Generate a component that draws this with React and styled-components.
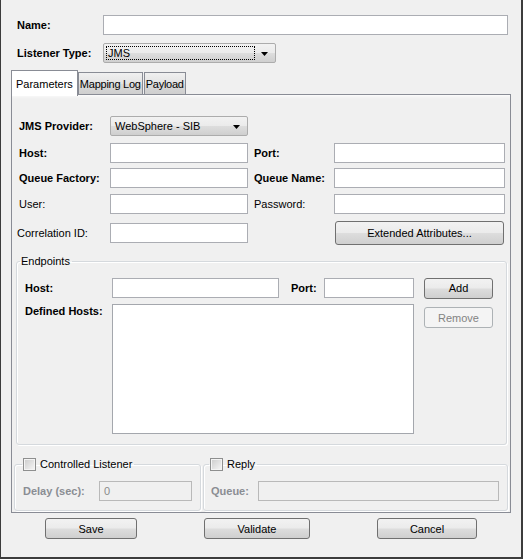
import React from "react";
import styled, { createGlobalStyle, css } from "styled-components";

const Global = createGlobalStyle`
  html, body { margin: 0; padding: 0; background: #f0f0f0; }
  body { font-family: "Liberation Sans", Arial, sans-serif; font-size: 11px; color: #000; }
  * { box-sizing: border-box; }
`;

const Frame = styled.div`
  width: 523px;
  height: 559px;
  background: #f0f0f0;
  border-left: 1px solid #3c3c3c;
  border-right: 2px solid #3c3c3c;
  border-bottom: 2px solid #3c3c3c;
  padding-top: 15px;
  display: flex;
  flex-direction: column;
`;

const TopForm = styled.div`
  padding-left: 16px;
  display: flex;
  flex-direction: column;
  gap: 8px;
`;

const Row = styled.div`
  display: flex;
  align-items: center;
  height: ${(p) => p.$h || 20}px;
  margin-top: ${(p) => p.$mt || 0}px;
  margin-left: ${(p) => p.$ml || 0}px;
`;

const Label = styled.div`
  width: ${(p) => p.$w}px;
  flex: none;
  font-weight: ${(p) => (p.$bold ? 700 : 400)};
  color: ${(p) => (p.$disabled ? "#8a8d93" : "#000")};
  padding-left: ${(p) => p.$pl || 0}px;
  margin-left: ${(p) => p.$shift || 0}px;
  white-space: nowrap;
  line-height: 14px;
  align-self: ${(p) => (p.$top ? "flex-start" : "center")};
`;

const TextBox = styled.div`
  width: ${(p) => p.$w}px;
  height: 20px;
  flex: none;
  background: ${(p) => (p.$disabled ? "#f0f0f0" : "#fff")};
  border: 1px solid ${(p) => (p.$disabled ? "#b9b9b9" : "#abadb3")};
  color: #8a8a8a;
  padding-left: 4px;
  line-height: 18px;
`;

const ListBox = styled.div`
  width: ${(p) => p.$w}px;
  height: ${(p) => p.$h}px;
  flex: none;
  background: #fff;
  border: 1px solid #a4a7ad;
`;

const btnBg = css`
  background: linear-gradient(#f2f2f2 0%, #ebebeb 48%, #dddddd 52%, #cfcfcf 100%);
`;

const Combo = styled.div`
  width: ${(p) => p.$w}px;
  height: 20px;
  flex: none;
  border: 1px solid #acacac;
  border-radius: 2px;
  ${btnBg};
  display: flex;
  align-items: center;
  padding: 2px;
`;

const ComboText = styled.div`
  flex: 1;
  height: 14px;
  line-height: 12px;
  padding-left: 1px;
  margin-right: 1px;
  border: 1px ${(p) => (p.$focus ? "dotted #000" : "solid transparent")};
`;

const Arrow = styled.svg`
  width: 17px;
  height: 14px;
  flex: none;
`;

const Button = styled.div`
  width: ${(p) => p.$w}px;
  height: ${(p) => p.$h || 21}px;
  flex: none;
  border: 1px solid ${(p) => (p.$disabled ? "#adb2b5" : "#707070")};
  border-radius: 3px;
  ${(p) => (p.$disabled ? "background: #f4f4f4;" : btnBg)};
  color: ${(p) => (p.$disabled ? "#838383" : "#000")};
  display: flex;
  align-items: center;
  justify-content: center;
  margin-left: ${(p) => p.$ml || 0}px;
  margin-top: ${(p) => p.$mt || 0}px;
  align-self: ${(p) => (p.$top ? "flex-start" : "center")};
`;

const TabsWrap = styled.div`
  margin-left: 10px;
  margin-top: 6px;
  width: 500px;
`;

const TabStrip = styled.div`
  display: flex;
  align-items: flex-end;
  height: 26px;
  position: relative;
  z-index: 1;
`;

const Tab = styled.div`
  height: ${(p) => (p.$active ? 26 : 23)}px;
  padding: 0 ${(p) => p.$pad}px;
  border: 1px solid #898c95;
  border-bottom: ${(p) => (p.$active ? "none" : "1px solid #898c95")};
  background: ${(p) =>
    p.$active ? "#fff" : "linear-gradient(#f0f0f0, #e3e3e3 50%, #d9d9d9 50%, #cfcfcf)"};
  margin-bottom: ${(p) => (p.$active ? -1 : 0)}px;
  margin-right: ${(p) => p.$mr || 0}px;
  letter-spacing: ${(p) => (p.$active ? 0 : -0.25)}px;
  display: flex;
  align-items: center;
  padding-top: ${(p) => (p.$active ? 0 : 1)}px;
  white-space: nowrap;
`;

const Panel = styled.div`
  border: 1px solid #898c95;
  height: 419px;
  margin-top: -1px;
  background: linear-gradient(#fcfcfc 0px, #f4f4f4 2px, #f0f0f0 4px);
  padding-top: 21px;
  display: flex;
  flex-direction: column;
`;

const Fields = styled.div`
  margin-left: 7px;
  display: flex;
  flex-direction: column;
`;

const Group = styled.fieldset`
  margin: ${(p) => p.$mt || 0}px 0 0 ${(p) => p.$ml || 0}px;
  width: ${(p) => p.$w}px;
  padding: 0 0 ${(p) => p.$pb || 0}px ${(p) => p.$pl || 0}px;
  border: 1px solid #d5d9dd;
  border-radius: 3px;
  box-shadow: inset 1px 1px 0 #fff, 1px 1px 0 #fff;
  min-width: 0;
  flex: none;
`;

const Legend = styled.legend`
  margin-left: ${(p) => p.$ml || 0}px;
  padding: 0 2px 0 1px;
  line-height: 14px;
  height: 14px;
  display: flex;
  align-items: center;
  gap: 4px;
`;

const CheckBox = styled.div`
  width: 13px;
  height: 13px;
  border: 1px solid #8e8f8f;
  background: linear-gradient(135deg, #cbcbcb, #f7f7f7);
  box-shadow: inset 0 0 0 1px #f4f4f4;
  flex: none;
`;

const GroupRow = styled.div`
  display: flex;
  gap: 2px;
  margin-left: 2px;
  margin-top: 12px;
`;

const Bottom = styled.div`
  display: flex;
  gap: 67px;
  padding-left: 44px;
  margin-top: 5px;
`;

const DownArrow = () => (
  <Arrow viewBox="0 0 17 14">
    <path d="M5 6h7l-3.5 4z" fill="#000" />
  </Arrow>
);

export default function App() {
  return (
    <Frame>
      <Global />
      <TopForm>
        <Row>
          <Label $w={86} $bold>Name:</Label>
          <TextBox $w={405} />
        </Row>
        <Row>
          <Label $w={86} $bold>Listener Type:</Label>
          <Combo $w={173}>
            <ComboText $focus>JMS</ComboText>
            <DownArrow />
          </Combo>
        </Row>
      </TopForm>

      <TabsWrap>
        <TabStrip>
          <Tab $active $pad={4}>Parameters</Tab>
          <Tab $pad={1} $mr={1}>Mapping Log</Tab>
          <Tab $pad={1}>Payload</Tab>
        </TabStrip>
        <Panel>
          <Fields>
            <Row>
              <Label $w={91} $bold>JMS Provider:</Label>
              <Combo $w={138}>
                <ComboText>WebSphere - SIB</ComboText>
                <DownArrow />
              </Combo>
            </Row>
            <Row $mt={7}>
              <Label $w={91} $bold>Host:</Label>
              <TextBox $w={138} />
              <Label $w={86} $pl={6} $bold>Port:</Label>
              <TextBox $w={171} />
            </Row>
            <Row $mt={5}>
              <Label $w={91} $bold>Queue Factory:</Label>
              <TextBox $w={138} />
              <Label $w={86} $pl={6} $bold>Queue Name:</Label>
              <TextBox $w={171} />
            </Row>
            <Row $mt={6}>
              <Label $w={91}>User:</Label>
              <TextBox $w={138} />
              <Label $w={86} $pl={6}>Password:</Label>
              <TextBox $w={171} />
            </Row>
            <Row $mt={7} $h={24}>
              <Label $w={93} $shift={-2}>Correlation ID:</Label>
              <TextBox $w={138} />
              <Button $w={169} $h={24} $ml={87}>Extended Attributes...</Button>
            </Row>
          </Fields>

          <Group $mt={9} $ml={4} $w={491} $pl={8} $pb={10}>
            <Legend $ml={-5}>Endpoints</Legend>
            <Row $mt={10}>
              <Label $w={87} $bold>Host:</Label>
              <TextBox $w={167} />
              <Label $w={45} $pl={12} $bold>Port:</Label>
              <TextBox $w={90} />
              <Button $w={69} $ml={10}>Add</Button>
            </Row>
            <Row $mt={6} $h={130}>
              <Label $w={87} $bold $top>Defined Hosts:</Label>
              <ListBox $w={302} $h={130} />
              <Button $w={69} $ml={10} $mt={3} $top $disabled>Remove</Button>
            </Row>
          </Group>

          <GroupRow>
            <Group $w={187} $pl={8} $pb={9}>
              <Legend $ml={-1}>
                <CheckBox />
                Controlled Listener
              </Legend>
              <Row $mt={10}>
                <Label $w={76} $bold $disabled>Delay (sec):</Label>
                <TextBox $w={93} $disabled>0</TextBox>
              </Row>
            </Group>
            <Group $w={305} $pl={7} $pb={9}>
              <Legend $ml={-2}>
                <CheckBox />
                Reply
              </Legend>
              <Row $mt={10}>
                <Label $w={47} $bold $disabled>Queue:</Label>
                <TextBox $w={241} $disabled />
              </Row>
            </Group>
          </GroupRow>
        </Panel>
      </TabsWrap>

      <Bottom>
        <Button $w={92}>Save</Button>
        <Button $w={106}>Validate</Button>
        <Button $w={100}>Cancel</Button>
      </Bottom>
    </Frame>
  );
}
